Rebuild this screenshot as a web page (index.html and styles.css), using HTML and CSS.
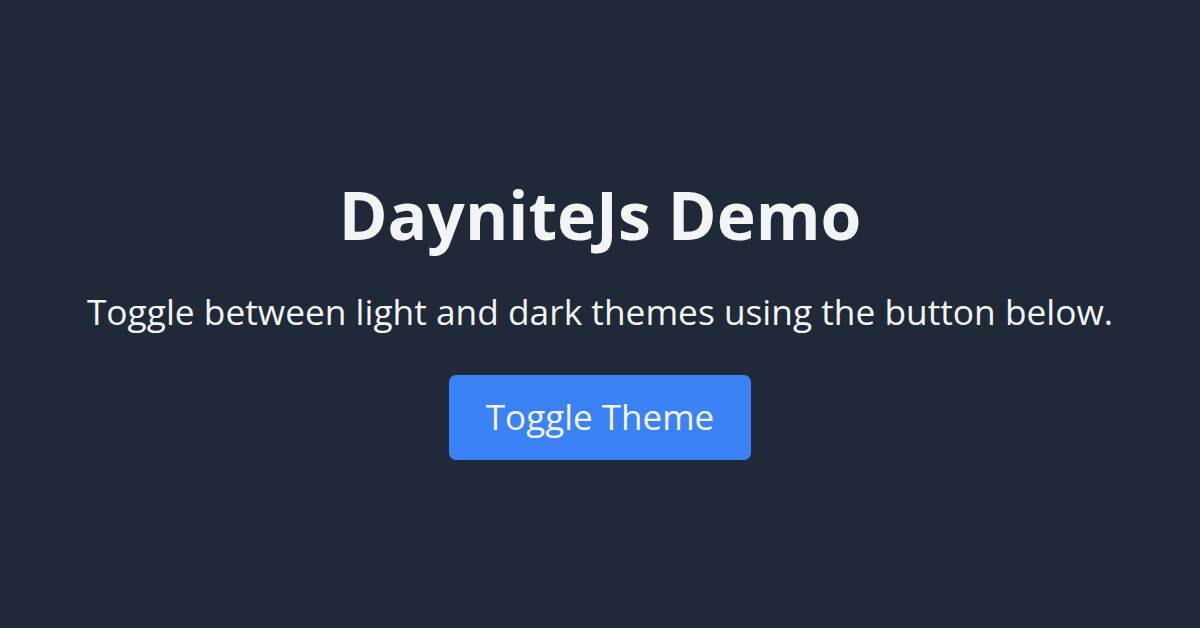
FILE: index.html
```html
<!DOCTYPE html>
<html lang="en">

<head>
    <meta charset="UTF-8">
    <meta name="viewport" content="width=device-width, initial-scale=1.0">
    <title>DayniteJs Demo</title>
    <link rel="stylesheet" href="styles.css">
</head>

<body>
    <main class="container">
        <h1 class="title">DayniteJs Demo</h1>
        <p class="subtitle">Toggle between light and dark themes using the button below.</p>
        <button class="toggle-btn" type="button">Toggle Theme</button>
    </main>
</body>

</html>
```

FILE: styles.css
```css
body {
    font-family: "Open Sans", "Noto Sans", Arial, sans-serif;
    background-color: #1f2937;
    color: #f3f4f6;
    display: flex;
    justify-content: center;
    align-items: center;
    height: 100vh;
    margin: 0;
}

.container {
    display: flex;
    flex-direction: column;
    align-items: center;
    text-align: center;
    margin-top: 13px;
}

.title {
    font-size: 66px;
    font-weight: 700;
    line-height: 1;
    margin: 0 0 43px;
}

.subtitle {
    font-size: 35.3px;
    line-height: 1.2;
    margin: 0 0 42px;
}

.toggle-btn {
    font-family: inherit;
    font-size: 35px;
    line-height: 48px;
    color: #f3f4f6;
    background-color: #3b82f6;
    border: none;
    border-radius: 7px;
    padding: 18.5px 37px;
    cursor: pointer;
}

.toggle-btn:hover {
    background-color: #2563eb;
}
```
